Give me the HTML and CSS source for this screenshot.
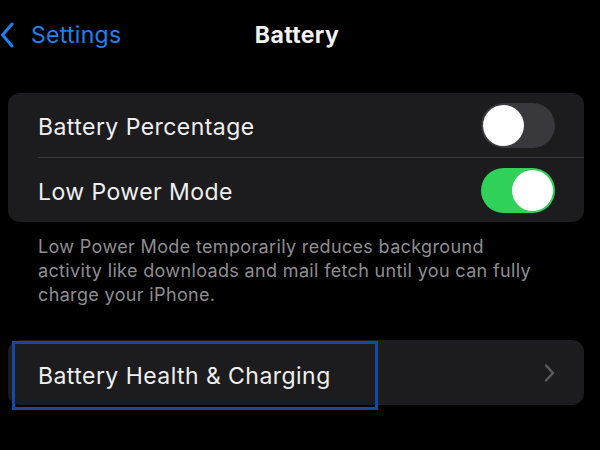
FILE: index.html
```html
<!DOCTYPE html>
<html lang="en">
<head>
<meta charset="utf-8">
<title>Battery</title>
<link rel="stylesheet" href="styles.css">
</head>
<body>
<div class="screen">
  <header class="nav">
    <a class="back" href="#">
      <svg class="back-icon" width="14" height="26" viewBox="0 0 14 26" aria-hidden="true">
        <path d="M12 2 L2.5 13 L12 24" fill="none" stroke="#1a82f0" stroke-width="3" stroke-linecap="round" stroke-linejoin="round"/>
      </svg>
      <span class="back-label">Settings</span>
    </a>
    <h1 class="title">Battery</h1>
    <span class="nav-spacer"></span>
  </header>

  <section class="group">
    <div class="row">
      <div class="row-body">
        <span class="label">Battery Percentage</span>
        <span class="switch"><span class="knob"></span></span>
      </div>
    </div>
    <div class="row">
      <div class="row-body divided">
        <span class="label">Low Power Mode</span>
        <span class="switch on"><span class="knob"></span></span>
      </div>
    </div>
  </section>

  <p class="footnote">Low Power Mode temporarily reduces background<br>activity like downloads and mail fetch until you can fully<br>charge your iPhone.</p>

  <section class="group group-link">
    <div class="row link">
      <span class="focus-ring"></span>
      <div class="row-body">
        <span class="label">Battery Health &amp; Charging</span>
        <svg class="chevron" width="12" height="20" viewBox="0 0 12 20" aria-hidden="true">
          <path d="M3 2.5 L10 10 L3 17.5" fill="none" stroke="#5c5c60" stroke-width="2.4" stroke-linecap="round" stroke-linejoin="round"/>
        </svg>
      </div>
    </div>
  </section>
</div>
</body>
</html>
```

FILE: styles.css
```css
* { box-sizing: border-box; }

html, body {
  margin: 0;
  padding: 0;
  background: #000;
}

body {
  font-family: Inter, "Liberation Sans", Arial, sans-serif;
  color: #efefef;
  width: 600px;
  height: 450px;
  overflow: hidden;
}

.screen {
  display: flex;
  flex-direction: column;
}

.nav {
  height: 70px;
  display: grid;
  grid-template-columns: 1fr auto 1fr;
  align-items: center;
}

.back {
  display: flex;
  align-items: center;
  gap: 17px;
  text-decoration: none;
  color: #1a82f0;
  font-size: 23px;
  letter-spacing: 0.3px;
  padding-bottom: 1px;
}

.back-icon { display: block; }

.title {
  margin: 0;
  font-size: 23px;
  font-weight: 700;
  letter-spacing: 0.4px;
  color: #f2f2f2;
  padding-right: 6px;
}

.group {
  margin: 23px 16px 0 8px;
  background: #1c1c1e;
  border-radius: 12px;
}

.row {
  padding-left: 30px;
  position: relative;
}

.row-body {
  height: 64px;
  display: flex;
  align-items: center;
  justify-content: space-between;
  padding-right: 29px;
}

.row-body.divided {
  height: 65px;
  border-top: 1px solid #38383a;
}

.label {
  font-size: 23px;
  letter-spacing: 0.45px;
  color: #efefef;
  padding-top: 4px;
}

.switch {
  width: 74px;
  height: 45px;
  border-radius: 23px;
  background: #39393d;
  padding: 2px;
  display: flex;
  justify-content: flex-start;
}

.switch.on {
  background: #30d158;
  justify-content: flex-end;
}

.knob {
  width: 41px;
  height: 41px;
  border-radius: 50%;
  background: #fff;
}

.footnote {
  margin: 13px 0 0 38px;
  font-size: 18px;
  line-height: 24px;
  letter-spacing: 0.35px;
  color: #8e8e93;
}

.group-link {
  margin-top: 33px;
}

.link .row-body {
  height: 65px;
  padding-right: 29px;
}

.link .label {
  padding-top: 6px;
}

.chevron { display: block; }

.focus-ring {
  position: absolute;
  left: 4px;
  top: 1px;
  width: 366px;
  height: 69px;
  border: 3px solid #1448a6;
  pointer-events: none;
}
```
